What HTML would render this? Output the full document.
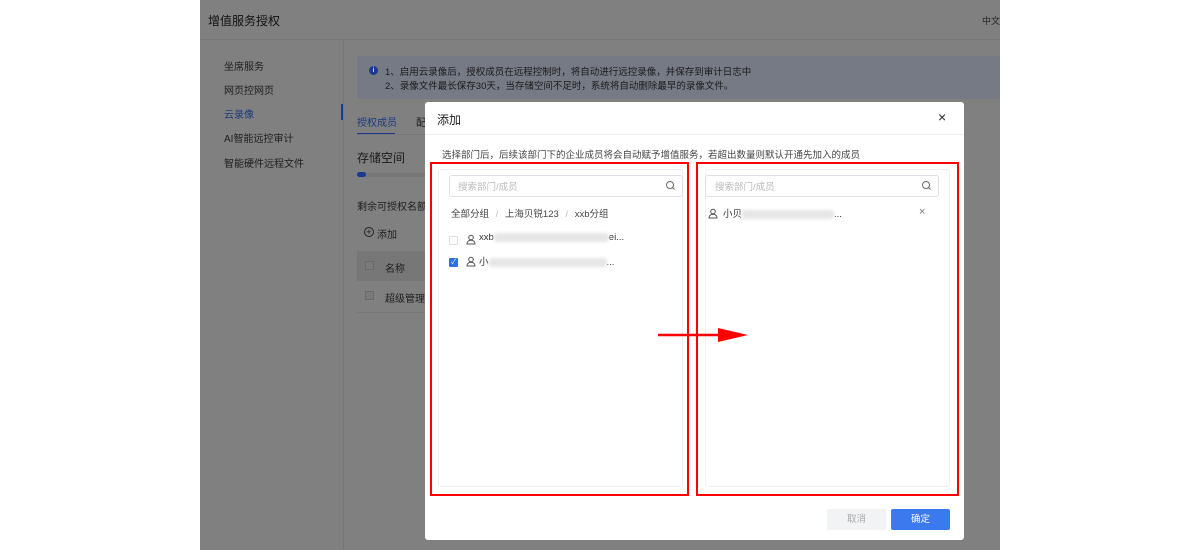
<!DOCTYPE html>
<html><head><meta charset="utf-8"><style>
*{box-sizing:border-box;margin:0;padding:0}
body{width:1200px;height:550px;position:relative;overflow:hidden;background:#fff;font-family:"Liberation Sans","Noto Sans CJK SC",sans-serif;font-size:10px;color:#333}
.a{position:absolute}
.app{left:200px;top:0;width:800px;height:550px;background:#808080;color:#1c1c1c}
.t{white-space:nowrap}
.blur{display:inline-block;height:9px;background:#e6e6e6;vertical-align:middle;border-radius:3px;filter:blur(1.5px)}
</style></head><body>
<div class="a app">
  <div class="a t" style="left:8px;top:12px;font-size:12px;color:#111">增值服务授权</div>
  <div class="a t" style="left:782px;top:14px;font-size:9px;color:#222">中文</div>
  <div class="a" style="left:0;top:39px;width:800px;height:1px;background:#777"></div>
  <div class="a" style="left:143px;top:40px;width:1px;height:510px;background:#777"></div>
  <div class="a t" style="left:24px;top:58px;color:#1e1e1e">坐席服务</div>
  <div class="a t" style="left:24px;top:82px;color:#1e1e1e">网页控网页</div>
  <div class="a t" style="left:24px;top:106px;color:#1a3a80">云录像</div>
  <div class="a" style="left:141px;top:104px;width:2px;height:16px;background:#1a3a90"></div>
  <div class="a t" style="left:24px;top:130px;color:#1e1e1e">AI智能远控审计</div>
  <div class="a t" style="left:24px;top:155px;color:#1e1e1e">智能硬件远程文件</div>
  <div class="a" style="left:157px;top:56px;width:643px;height:43px;background:#767a84"></div>
  <div class="a" style="left:169px;top:66px;width:9px;height:9px;border-radius:50%;background:#1a3a90;color:#ccc;font-size:7px;text-align:center;line-height:9px;font-weight:bold">i</div>
  <div class="a t" style="left:185px;top:64px;font-size:9.5px;color:#1a1a1a">1、启用云录像后，授权成员在远程控制时，将自动进行远控录像，并保存到审计日志中</div>
  <div class="a t" style="left:185px;top:78px;font-size:9.5px;color:#1a1a1a">2、录像文件最长保存30天，当存储空间不足时，系统将自动删除最早的录像文件。</div>
  <div class="a t" style="left:157px;top:114px;color:#1a3a80">授权成员</div>
  <div class="a t" style="left:216px;top:114px;color:#1e1e1e">配</div>
  <div class="a" style="left:157px;top:133px;width:38px;height:1.5px;background:#1a3a90"></div>
  <div class="a" style="left:157px;top:134px;width:70px;height:1px;background:#777"></div>
  <div class="a t" style="left:157px;top:149px;font-size:12px;color:#1a1a1a">存储空间</div>
  <div class="a" style="left:157px;top:173px;width:70px;height:4px;background:#777;border-radius:2px"></div>
  <div class="a" style="left:157px;top:172px;width:9px;height:5px;background:#1a3a90;border-radius:3px"></div>
  <div class="a t" style="left:157px;top:198px;color:#1e1e1e">剩余可授权名额</div>
  <div class="a" style="left:164px;top:227px;width:10px;height:10px;border:1px solid #222;border-radius:50%;font-size:9px;line-height:8px;text-align:center">+</div>
  <div class="a t" style="left:177px;top:226px;color:#1e1e1e">添加</div>
  <div class="a" style="left:157px;top:251px;width:70px;height:30px;background:#777"></div>
  <div class="a" style="left:165px;top:261px;width:9px;height:9px;border:1px solid #6a6a6a;background:#7a7a7a"></div>
  <div class="a t" style="left:185px;top:260px;color:#1e1e1e">名称</div>
  <div class="a" style="left:165px;top:291px;width:9px;height:9px;border:1px solid #6a6a6a;background:#7a7a7a"></div>
  <div class="a t" style="left:185px;top:290px;color:#1e1e1e">超级管理</div>
  <div class="a" style="left:157px;top:312px;width:70px;height:1px;background:#777"></div>
</div>

<div class="a" style="left:425px;top:102px;width:539px;height:438px;background:#fff;border-radius:3px">
  <div class="a t" style="left:12px;top:9px;font-size:12px;color:#222">添加</div>
  <div class="a t" style="left:513px;top:7px;font-size:14px;color:#222">×</div>
  <div class="a" style="left:0;top:32px;width:539px;height:1px;background:#eee"></div>
  <div class="a t" style="left:17px;top:45px;font-size:9.5px;color:#444">选择部门后，后续该部门下的企业成员将会自动赋予增值服务，若超出数量则默认开通先加入的成员</div>
  <!-- left panel -->
  <div class="a" style="left:13px;top:67px;width:245px;height:318px;border:1px solid #eef0f3;border-radius:3px"></div>
  <div class="a" style="left:24px;top:73px;width:234px;height:22px;border:1px solid #dcdfe6;border-radius:3px"></div>
  <div class="a t" style="left:33px;top:77px;font-size:9.5px;color:#bbb">搜索部门/成员</div>
  <svg class="a" style="left:240px;top:78px" width="11" height="11" viewBox="0 0 11 11"><circle cx="5" cy="5" r="3.5" fill="none" stroke="#666" stroke-width="1"/><path d="M7.6 7.6L9.5 9.5" stroke="#666" stroke-width="1"/></svg>
  <div class="a t" style="left:26px;top:104px;font-size:9.5px;color:#444">全部分组 <span style="color:#bbb;margin:0 4px">/</span> 上海贝锐123 <span style="color:#bbb;margin:0 4px">/</span> xxb分组</div>
  <div class="a" style="left:24px;top:134px;width:9px;height:9px;border:1px solid #ddd;border-radius:1px"></div>
  <svg class="a" style="left:41px;top:132px" width="10" height="11" viewBox="0 0 10 11"><circle cx="5" cy="3.5" r="2.3" fill="none" stroke="#555"/><path d="M1 10c0-2.5 1.8-3.8 4-3.8s4 1.3 4 3.8z" fill="none" stroke="#555"/></svg>
  <div class="a t" style="left:54px;top:130px;font-size:9.5px;color:#333">xxb<span class="blur" style="width:115px"></span>ei...</div>
  <div class="a" style="left:24px;top:156px;width:9px;height:9px;background:#2f6fe0;border-radius:1px;color:#fff;font-size:7px;line-height:9px;text-align:center">✓</div>
  <svg class="a" style="left:41px;top:154px" width="10" height="11" viewBox="0 0 10 11"><circle cx="5" cy="3.5" r="2.3" fill="none" stroke="#555"/><path d="M1 10c0-2.5 1.8-3.8 4-3.8s4 1.3 4 3.8z" fill="none" stroke="#555"/></svg>
  <div class="a t" style="left:54px;top:152px;font-size:9.5px;color:#333">小<span class="blur" style="width:118px"></span>...</div>
  <!-- right panel -->
  <div class="a" style="left:280px;top:67px;width:245px;height:318px;border:1px solid #eef0f3;border-radius:3px"></div>
  <div class="a" style="left:280px;top:73px;width:234px;height:22px;border:1px solid #dcdfe6;border-radius:3px"></div>
  <div class="a t" style="left:290px;top:77px;font-size:9.5px;color:#bbb">搜索部门/成员</div>
  <svg class="a" style="left:496px;top:78px" width="11" height="11" viewBox="0 0 11 11"><circle cx="5" cy="5" r="3.5" fill="none" stroke="#666" stroke-width="1"/><path d="M7.6 7.6L9.5 9.5" stroke="#666" stroke-width="1"/></svg>
  <svg class="a" style="left:283px;top:106px" width="10" height="11" viewBox="0 0 10 11"><circle cx="5" cy="3.5" r="2.3" fill="none" stroke="#555"/><path d="M1 10c0-2.5 1.8-3.8 4-3.8s4 1.3 4 3.8z" fill="none" stroke="#555"/></svg>
  <div class="a t" style="left:298px;top:104px;font-size:9.5px;color:#333">小贝<span class="blur" style="width:92px"></span>...</div>
  <div class="a t" style="left:494px;top:104px;font-size:11px;color:#777">×</div>
  <!-- buttons -->
  <div class="a" style="left:402px;top:407px;width:59px;height:21px;background:#f2f3f5;border-radius:2px;color:#aaa;font-size:9.5px;line-height:21px;text-align:center">取消</div>
  <div class="a" style="left:466px;top:407px;width:59px;height:21px;background:#3a79ee;border-radius:2px;color:#fff;font-size:9.5px;line-height:21px;text-align:center">确定</div>
</div>

<!-- red annotations -->
<div class="a" style="left:430px;top:162px;width:259px;height:334px;border:2px solid #f00"></div>
<div class="a" style="left:696px;top:162px;width:263px;height:334px;border:2px solid #f00"></div>
<svg class="a" style="left:655px;top:325px" width="100" height="20" viewBox="0 0 100 20"><path d="M3 10H65" stroke="#f00" stroke-width="2.5"/><path d="M63 3L93 10L63 17z" fill="#f00"/></svg>
</body></html>
